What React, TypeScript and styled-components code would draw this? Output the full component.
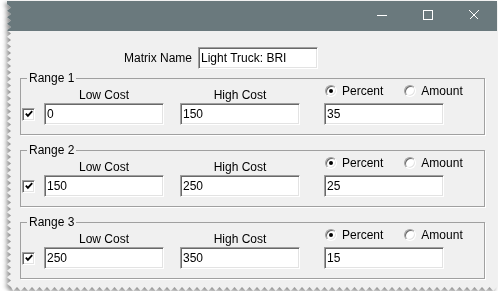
import React from 'react'
import styled, { createGlobalStyle } from 'styled-components'

const GlobalStyle = createGlobalStyle`
  html, body {
    margin: 0;
    padding: 0;
    background: #fff;
  }
  body {
    font-family: "Liberation Sans", Arial, sans-serif;
    font-size: 12px;
    color: #000;
  }
`

const ranges = [
    { name: 'Range 1', low: '0', high: '150', value: '35' },
    { name: 'Range 2', low: '150', high: '250', value: '25' },
    { name: 'Range 3', low: '250', high: '350', value: '15' },
]

// torn-paper outline: zigzag on the left and bottom sides
const tornEdge = (w: number, h: number) => {
    const pts: [number, number][] = [[0, 0], [w, 0]]
    for (let x = w, i = 0; x > 4; x -= 3.75, i++) pts.push([x, i % 2 ? h : h - 4])
    for (let y = h - 4, i = 0; y > 0; y -= 3.25, i++) pts.push([i % 2 ? 0 : 4, y])
    return `polygon(${pts.map(([x, y]) => `${x.toFixed(2)}px ${y.toFixed(2)}px`).join(', ')})`
}

const App = () => {
    const clip = tornEdge(490, 290)

    return (
        <>
            <GlobalStyle />
            <Frame>
                <Window $clip={clip}>
                    <TitleBar>
                        <CapButton>
                            <svg width="10" height="10" viewBox="0 0 10 10">
                                <path d="M0 5.5H10" stroke="#fff" strokeWidth="1" />
                            </svg>
                        </CapButton>
                        <CapButton>
                            <svg width="10" height="10" viewBox="0 0 10 10">
                                <rect x="0.5" y="0.5" width="9" height="9" fill="none" stroke="#fff" strokeWidth="1" />
                            </svg>
                        </CapButton>
                        <CapButton>
                            <svg width="10" height="10" viewBox="0 0 10 10">
                                <path d="M0.5 0.5L9.5 9.5M9.5 0.5L0.5 9.5" stroke="#fff" strokeWidth="1.1" />
                            </svg>
                        </CapButton>
                    </TitleBar>
                    <Body>
                        <NameRow>
                            <span>Matrix Name</span>
                            <Field $w={120} defaultValue="Light Truck: BRI" />
                        </NameRow>
                        {ranges.map((r) => (
                            <Group key={r.name}>
                                <Legend>{r.name}</Legend>
                                <Grid>
                                    <span />
                                    <ColLabel>Low Cost</ColLabel>
                                    <ColLabel>High Cost</ColLabel>
                                    <RadioRow>
                                        <RadioItem>
                                            <Radio $on />
                                            Percent
                                        </RadioItem>
                                        <RadioItem>
                                            <Radio />
                                            Amount
                                        </RadioItem>
                                    </RadioRow>
                                    <CheckBox>
                                        <svg width="8" height="8" viewBox="0 0 8 8">
                                            <path d="M0.8 3.6L2.9 5.9L7.2 1.2" fill="none" stroke="#000" strokeWidth="1.8" />
                                        </svg>
                                    </CheckBox>
                                    <Field $w={120} defaultValue={r.low} />
                                    <Field $w={120} defaultValue={r.high} />
                                    <Field $w={120} defaultValue={r.value} />
                                </Grid>
                            </Group>
                        ))}
                    </Body>
                </Window>
            </Frame>
        </>
    )
}

export default App

const Frame = styled.div`
    padding: 1px 0 0 7px;
    width: 490px;
    filter: drop-shadow(-2px 2px 2px rgba(0, 0, 0, 0.45));
`
const Window = styled.div<{ $clip: string }>`
    width: 490px;
    height: 290px;
    background: #f0f0f0;
    clip-path: ${(p) => p.$clip};
    display: flex;
    flex-direction: column;
`
const TitleBar = styled.div`
    height: 30px;
    background: #6a797d;
    display: flex;
    justify-content: flex-end;
`
const CapButton = styled.div`
    width: 46px;
    height: 30px;
    box-sizing: border-box;
    padding-bottom: 2px;
    display: flex;
    align-items: center;
    justify-content: center;
    svg {
        display: block;
        shape-rendering: crispEdges;
    }
`
const Body = styled.div`
    display: flex;
    flex-direction: column;
    gap: 8px;
    padding: 16px 12px 0 13px;
`
const NameRow = styled.div`
    display: flex;
    align-items: center;
    gap: 6px;
    padding-left: 104px;
    margin-bottom: -6px;
`
const Field = styled.input<{ $w: number }>`
    box-sizing: border-box;
    width: ${(p) => p.$w}px;
    height: 22px;
    margin: 0;
    padding: 0 2px;
    font: 12px "Liberation Sans", Arial, sans-serif;
    color: #000;
    background: #fff;
    border: 1px solid;
    border-color: #a0a0a0 #fff #fff #a0a0a0;
    box-shadow: inset 1px 1px 0 #696969, inset -1px -1px 0 #e3e3e3;
    outline: none;
`
const Group = styled.fieldset`
    margin: 0;
    padding: 0 0 9px 0;
    min-inline-size: 0;
    border: 1px solid #a0a0a0;
    box-shadow: 1px 1px 0 #fff;
`
const Legend = styled.legend`
    margin-left: 6px;
    padding: 0 2px;
    line-height: 14px;
    font-size: 12px;
`
const Grid = styled.div`
    display: grid;
    grid-template-columns: 23px 136px 144px 120px;
    grid-template-rows: 18px 22px;
`
const ColLabel = styled.div`
    width: 120px;
    align-self: end;
    text-align: center;
    line-height: 14px;
    padding-bottom: 1px;
`
const RadioRow = styled.div`
    align-self: end;
    display: flex;
    gap: 21px;
    padding-left: 1px;
    margin-bottom: 5px;
    line-height: 14px;
`
const RadioItem = styled.label`
    display: flex;
    align-items: center;
    gap: 5px;
`
const Radio = styled.span<{ $on?: boolean }>`
    width: 12px;
    height: 12px;
    box-sizing: border-box;
    border-radius: 50%;
    background: #fff;
    border: 1px solid;
    border-color: #a0a0a0 #fff #fff #a0a0a0;
    box-shadow: inset 1px 1px 0 #696969, inset -1px -1px 0 #e3e3e3;
    display: flex;
    align-items: center;
    justify-content: center;
    &::after {
        content: '';
        width: 4px;
        height: 4px;
        border-radius: 50%;
        background: ${(p) => (p.$on ? '#000' : 'transparent')};
    }
`
const CheckBox = styled.span`
    align-self: center;
    margin-left: 1px;
    width: 13px;
    height: 13px;
    box-sizing: border-box;
    background: #fff;
    border: 1px solid;
    border-color: #a0a0a0 #fff #fff #a0a0a0;
    box-shadow: inset 1px 1px 0 #696969, inset -1px -1px 0 #e3e3e3;
    display: flex;
    align-items: center;
    justify-content: center;
    svg {
        display: block;
    }
`
